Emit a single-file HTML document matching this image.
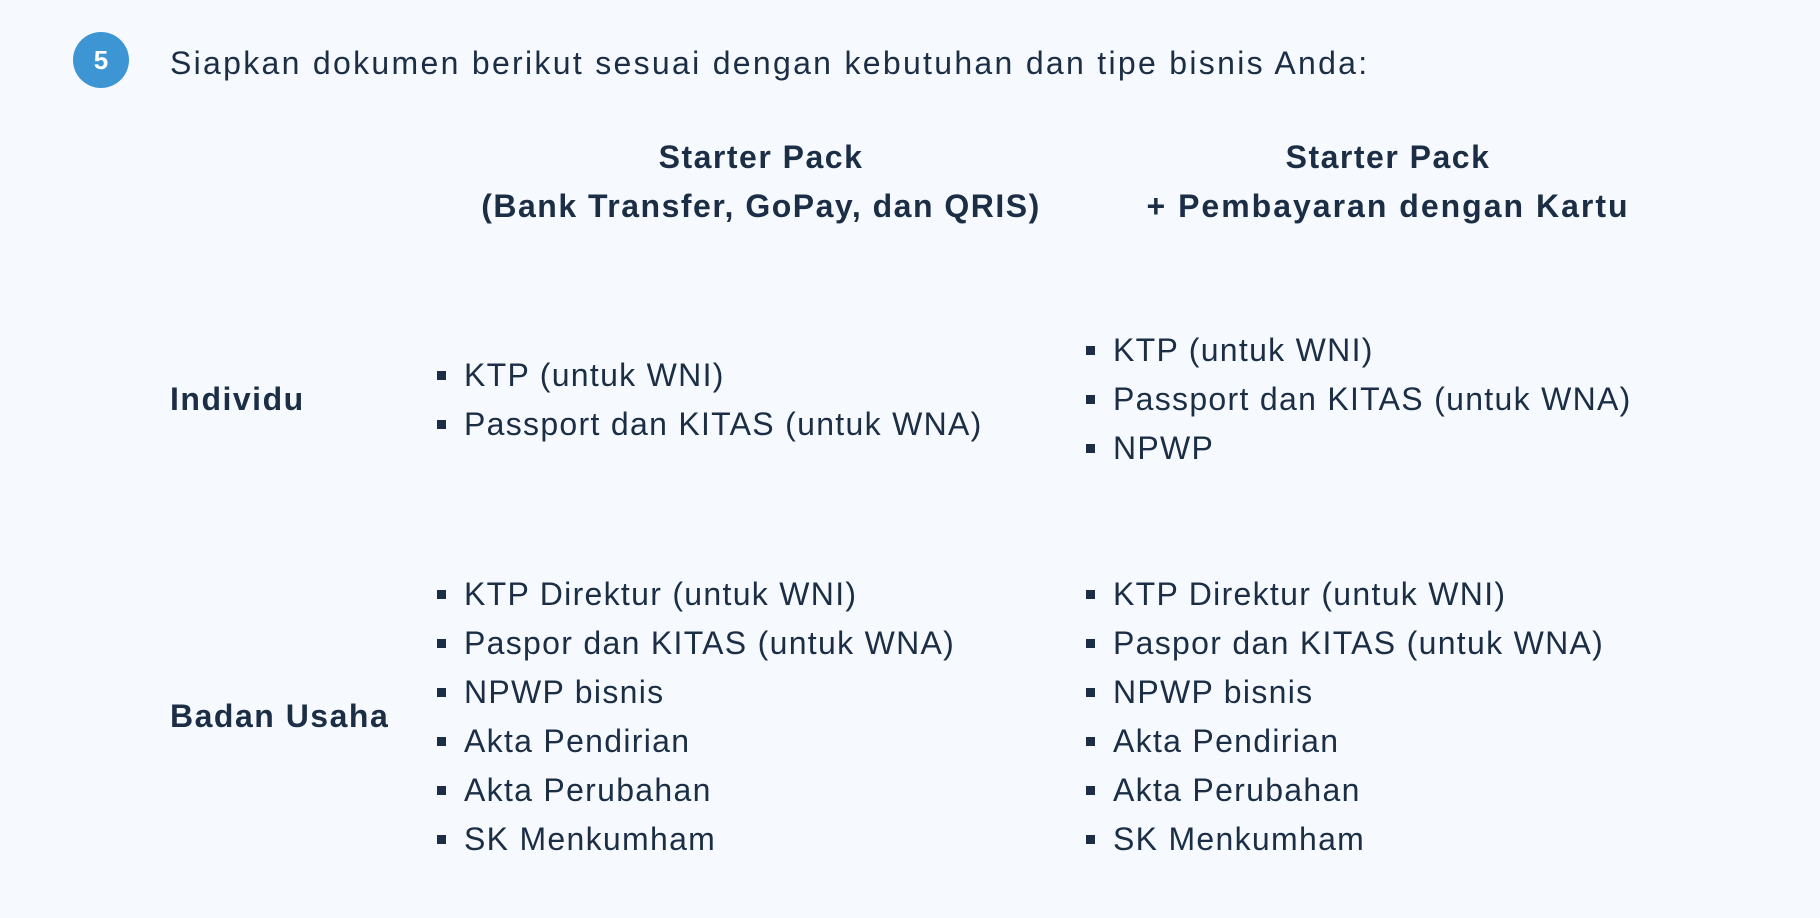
<!DOCTYPE html>
<html><head><meta charset="utf-8"><style>
html,body{margin:0;padding:0;width:1820px;height:918px;background:#f6fafe;overflow:hidden}
body{position:relative;font-family:"Liberation Sans",sans-serif;color:#1b2e45}
.a{position:absolute;white-space:nowrap;line-height:1}
.t{font-size:32px;letter-spacing:1.3px}
.h{font-size:32px;letter-spacing:2.3px}
.b{font-weight:bold;font-size:32px;letter-spacing:1.5px}
.sq{position:absolute;width:9px;height:9px;background:#1b2e45}
.c{position:absolute;left:73px;top:32px;width:56px;height:56px;border-radius:50%;background:#3d95d3;color:#fff;font-weight:bold;font-size:26px;line-height:56px;text-align:center}
.ctr{transform:translateX(-50%);text-align:center}
</style></head><body>
<div class="c">5</div>
<div class="a h" style="left:170px;top:47px">Siapkan dokumen berikut sesuai dengan kebutuhan dan tipe bisnis Anda:</div>
<div class="a b ctr" style="left:761px;top:141px">Starter Pack</div>
<div class="a b ctr" style="left:761px;top:190px">(Bank Transfer, GoPay, dan QRIS)</div>
<div class="a b ctr" style="left:1388px;top:141px">Starter Pack</div>
<div class="a b ctr" style="left:1388px;top:190px;letter-spacing:2px">+ Pembayaran dengan Kartu</div>
<div class="a b" style="left:170px;top:383px">Individu</div>
<div class="a b" style="left:170px;top:700px">Badan Usaha</div>

<div class="sq" style="left:437px;top:371px"></div><div class="a t" style="left:464px;top:359px">KTP (untuk WNI)</div>
<div class="sq" style="left:437px;top:420px"></div><div class="a t" style="left:464px;top:408px">Passport dan KITAS (untuk WNA)</div>

<div class="sq" style="left:1086px;top:346px"></div><div class="a t" style="left:1113px;top:334px">KTP (untuk WNI)</div>
<div class="sq" style="left:1086px;top:395px"></div><div class="a t" style="left:1113px;top:383px">Passport dan KITAS (untuk WNA)</div>
<div class="sq" style="left:1086px;top:444px"></div><div class="a t" style="left:1113px;top:432px">NPWP</div>

<div class="sq" style="left:437px;top:590px"></div><div class="a t" style="left:464px;top:578px">KTP Direktur (untuk WNI)</div>
<div class="sq" style="left:437px;top:639px"></div><div class="a t" style="left:464px;top:627px">Paspor dan KITAS (untuk WNA)</div>
<div class="sq" style="left:437px;top:688px"></div><div class="a t" style="left:464px;top:676px">NPWP bisnis</div>
<div class="sq" style="left:437px;top:737px"></div><div class="a t" style="left:464px;top:725px">Akta Pendirian</div>
<div class="sq" style="left:437px;top:786px"></div><div class="a t" style="left:464px;top:774px">Akta Perubahan</div>
<div class="sq" style="left:437px;top:835px"></div><div class="a t" style="left:464px;top:823px">SK Menkumham</div>

<div class="sq" style="left:1086px;top:590px"></div><div class="a t" style="left:1113px;top:578px">KTP Direktur (untuk WNI)</div>
<div class="sq" style="left:1086px;top:639px"></div><div class="a t" style="left:1113px;top:627px">Paspor dan KITAS (untuk WNA)</div>
<div class="sq" style="left:1086px;top:688px"></div><div class="a t" style="left:1113px;top:676px">NPWP bisnis</div>
<div class="sq" style="left:1086px;top:737px"></div><div class="a t" style="left:1113px;top:725px">Akta Pendirian</div>
<div class="sq" style="left:1086px;top:786px"></div><div class="a t" style="left:1113px;top:774px">Akta Perubahan</div>
<div class="sq" style="left:1086px;top:835px"></div><div class="a t" style="left:1113px;top:823px">SK Menkumham</div>
</body></html>
